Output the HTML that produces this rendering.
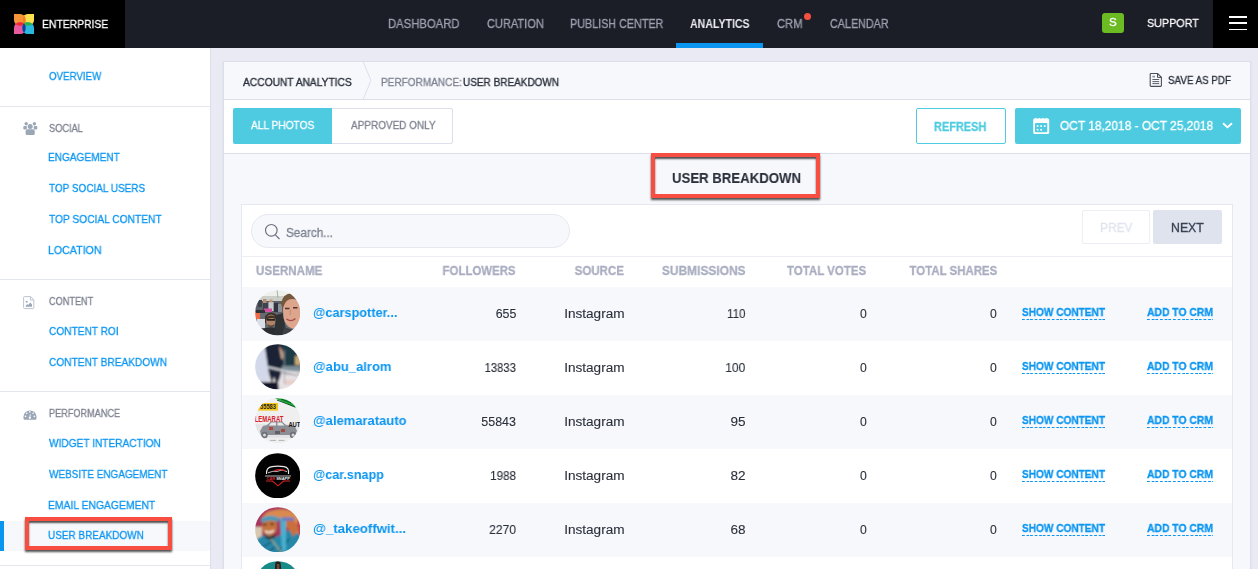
<!DOCTYPE html>
<html lang="en">
<head>
<meta charset="utf-8">
<title>Account Analytics - User Breakdown</title>
<style>
*{box-sizing:border-box;margin:0;padding:0}
html,body{width:1258px;height:569px;overflow:hidden;background:#e9eaf3;font-family:"Liberation Sans",sans-serif;color:#2a2f3a}
.abs{position:absolute}
span.t{position:absolute;white-space:nowrap;line-height:1;display:block;will-change:transform;-webkit-text-stroke:.3px currentColor}
#nav{position:absolute;left:0;top:0;width:1258px;height:48px;background:#1b1d27}
#logo{position:absolute;left:0;top:0;width:125px;height:49px;background:#000}
#burger{position:absolute;left:1213px;top:0;width:45px;height:48px;background:#000}
#burger i{position:absolute;left:16px;width:18px;height:2px;background:#fff}
#avatarS{position:absolute;left:1102px;top:13px;width:22px;height:20px;border-radius:3px;background:#6cbb23}
#side{position:absolute;left:0;top:48px;width:211px;height:521px;background:#fff;border-right:1px solid #dcdfe9}
.hr{position:absolute;left:0;width:210px;height:1px;background:#e4e6ef}
#card{position:absolute;left:223px;top:61px;width:1028px;height:520px;background:#f7f8fc;border:1px solid #dcdfe9;box-shadow:0 1px 2px rgba(120,125,160,.15)}
#tool{position:absolute;left:224px;top:99px;width:1026px;height:55px;background:#fff;border-top:1px solid #dcdfe9;border-bottom:1px solid #dcdfe9}
#inner{position:absolute;left:241px;top:204px;width:992px;height:380px;background:#fff;border:1px solid #e6e8f0}
.row{position:absolute;left:242px;width:990px;height:54px;background:#f7f8fc}
.av{position:absolute;left:255px;width:45px;height:45px;border-radius:50%;overflow:hidden}
.redbox{position:absolute;border:4px solid #f84d41;box-shadow:0 2px 2px rgba(0,0,0,.68),inset 0 2px 2px rgba(0,0,0,.68)}
</style>
</head>
<body>
<div id="nav"></div>
<div id="logo">
  <svg class="abs" style="left:14px;top:14px" width="20" height="20" viewBox="0 0 20 20">
    <defs>
      <path id="pt" d="M0 0 H6.2 A5.5 5.5 0 0 1 11.7 5.5 V6.7 A5 5 0 0 1 6.7 11.7 H5.5 A5.5 5.5 0 0 1 0 6.2 Z"/>
      <clipPath id="cO"><use href="#pt"/></clipPath>
      <clipPath id="cC"><use href="#pt" transform="translate(20 20) scale(-1 -1)"/></clipPath>
    </defs>
    <use href="#pt" fill="#f8933a"/>
    <use href="#pt" fill="#ffe14d" transform="translate(20 0) scale(-1 1)"/>
    <use href="#pt" fill="#ea5a9e" transform="translate(0 20) scale(1 -1)"/>
    <use href="#pt" fill="#29b8e0" transform="translate(20 20) scale(-1 -1)"/>
    <g clip-path="url(#cO)">
      <use href="#pt" fill="#f57f20" transform="translate(20 0) scale(-1 1)"/>
      <use href="#pt" fill="#ee2c30" transform="translate(0 20) scale(1 -1)"/>
    </g>
    <g clip-path="url(#cC)">
      <use href="#pt" fill="#2eb24c" transform="translate(20 0) scale(-1 1)"/>
      <use href="#pt" fill="#1c3a9a" transform="translate(0 20) scale(1 -1)"/>
    </g>
  </svg>
</div>
<div class="abs" style="left:676px;top:43px;width:87px;height:5px;background:#0a95f0"></div>
<div class="abs" style="left:804px;top:13px;width:7px;height:7px;border-radius:50%;background:#f4503f"></div>
<div id="avatarS"></div>
<div id="burger"><i style="top:16px"></i><i style="top:22px"></i><i style="top:29px;height:1px"></i></div>

<div id="side"></div>
<div class="abs" style="left:0;top:521px;width:210px;height:30px;background:#f7f8fc"></div>
<div class="abs" style="left:0;top:521px;width:4px;height:30px;background:#0a95f0"></div>
<div class="hr" style="top:106px"></div>
<div class="hr" style="top:279px"></div>
<div class="hr" style="top:391px"></div>
<div class="hr" style="top:565px"></div>
<div class="redbox" style="left:25px;top:517px;width:147px;height:33px"></div>

<div id="card"></div>
<div id="tool"></div>
<svg class="abs" style="left:362px;top:62px" width="12" height="37" viewBox="0 0 12 37"><path d="M1.3 0 L9 18.5 L1.3 37" fill="none" stroke="#dcdfe9" stroke-width="1"/></svg>

<div class="abs" style="left:233px;top:108px;width:220px;height:36px;border:1px solid #dcdfe9;border-radius:2px;background:#fff"></div>
<div class="abs" style="left:233px;top:108px;width:99px;height:36px;background:#4ecbe0;border-radius:2px 0 0 2px"></div>
<div class="abs" style="left:916px;top:108px;width:90px;height:36px;border:1px solid #4ecbe0;border-radius:2px;background:#fff"></div>
<div class="abs" style="left:1015px;top:108px;width:226px;height:36px;border-radius:2px;background:#4ecbe0"></div>

<div class="redbox" style="left:651px;top:153px;width:169px;height:45px"></div>

<div id="inner"></div>
<div class="abs" style="left:251px;top:214px;width:319px;height:34px;border:1px solid #e6e8f0;border-radius:17px;background:#f7f8fc"></div>
<svg class="abs" style="left:264px;top:223px" width="17" height="17" viewBox="0 0 17 17"><circle cx="7.3" cy="7.3" r="5.8" fill="none" stroke="#6d7280" stroke-width="1.2"/><path d="M11.3 11.8 L15.5 16" stroke="#6d7280" stroke-width="1.2"/></svg>
<div class="abs" style="left:1082px;top:210px;width:68px;height:34px;border:1px solid #eceef4;border-radius:2px;background:#fff"></div>
<div class="abs" style="left:1153px;top:210px;width:69px;height:34px;border-radius:2px;background:#dfe3ee"></div>
<div class="abs" style="left:242px;top:256px;width:990px;height:1px;background:#eceef4"></div>
<div class="row" style="top:287px"></div>
<div class="row" style="top:395px"></div>
<div class="row" style="top:503px"></div>
<svg class="abs" width="0" height="0"><defs>
  <filter id="bl1" x="-10%" y="-10%" width="120%" height="120%"><feGaussianBlur stdDeviation="0.9"/></filter>
  <filter id="bl2" x="-10%" y="-10%" width="120%" height="120%"><feGaussianBlur stdDeviation="0.6"/></filter>
  <clipPath id="cc"><circle cx="22.75" cy="22.75" r="22.6"/></clipPath>
</defs></svg>
<svg class="abs" style="left:254.7px;top:290.2px" width="45.5" height="45.5" viewBox="0 0 45.5 45.5">
  <g clip-path="url(#cc)"><g filter="url(#bl2)">
    <rect x="-3" y="-3" width="52" height="52" fill="#666b70"/>
    <rect x="-3" y="-3" width="52" height="11" fill="#eef0ec"/>
    <rect x="4" y="6" width="26" height="7" fill="#cdd0c8"/>
    <path d="M22 0 L23 8" stroke="#9aa09a" stroke-width=".8"/>
    <rect x="0" y="11" width="28" height="12" fill="#5c6168"/>
    <rect x="3" y="10" width="4" height="7" fill="#3a3f4c"/><rect x="8" y="9" width="3.5" height="4" fill="#b89078"/>
    <rect x="8" y="13" width="5" height="8" fill="#3d4250"/>
    <rect x="13.5" y="12" width="5" height="9" fill="#c9ccd2"/><rect x="14.5" y="9.5" width="3" height="3" fill="#c29a80"/>
    <rect x="19" y="13" width="4" height="9" fill="#2f3440"/><rect x="23" y="14" width="4" height="8" fill="#8c9098"/>
    <rect x="9" y="18.5" width="8" height="3.5" fill="#d650a0"/>
    <rect x="-1" y="22" width="6" height="7" fill="#ee6a4a"/>
    <rect x="1" y="20" width="9" height="3" fill="#2e3138"/>
    <rect x="2" y="29" width="8" height="9" fill="#d9dde6"/>
    <path d="M10 26 Q16 19 23 26 L23 33 L10 33 Z" fill="#3b302a"/>
    <ellipse cx="16" cy="30.5" rx="5" ry="6" fill="#b08468"/>
    <path d="M11 27.5 Q16 23.5 21.5 27.5 L21 29 Q16 27 11.5 29.5 Z" fill="#3b302a"/>
    <rect x="11.5" y="29" width="8.5" height="1.7" fill="#26221f"/>
    <path d="M12.5 34 Q16 37 19.5 34 L19 36 Q16 38 13 36 Z" fill="#5a4034"/>
    <path d="M7 39 Q17 35 27 40 L30 50 H3 Z" fill="#2c2f33"/>
    <path d="M21 25 L28 23 L32 46 L19 46 Z" fill="#2f3236"/>
    <path d="M27.5 11 Q32 1 43 7 L48 28 Q45 41 37 38.5 Q30.5 36 28.5 28 Z" fill="#dca58c"/>
    <path d="M26 14 Q28 2 39 3.5 Q46 5 47.5 13 Q40 7.5 34 9.5 Q29.5 11.5 28 19 Z" fill="#76583e"/>
    <path d="M30 18.4 h4.5 M38 17.8 h4.5" stroke="#4f362a" stroke-width="1.5"/>
    <path d="M35.5 20 L35 25" stroke="#c48a74" stroke-width="1"/>
    <path d="M31.5 29 Q36 32.5 40.5 28.5" stroke="#a84a48" stroke-width="1.4" fill="none"/>
    <path d="M29 36 Q36 43 45 35 L48 48 H27 Z" fill="#3c3f44"/>
  </g></g>
</svg>
<svg class="abs" style="left:254.7px;top:344.4px" width="45.5" height="45.5" viewBox="0 0 45.5 45.5">
  <g clip-path="url(#cc)"><g filter="url(#bl1)">
    <rect x="-3" y="-3" width="52" height="52" fill="#e6e2e4"/>
    <rect x="24" y="-3" width="26" height="27" fill="#1f3b45"/>
    <rect x="40" y="12" width="8" height="9" fill="#c5a878"/>
    <rect x="26" y="22" width="24" height="5" fill="#7d8f98"/>
    <rect x="28" y="27" width="20" height="4" fill="#c9c3c8"/>
    <rect x="30" y="36" width="12" height="5" fill="#e8cfc8"/>
    <path d="M-3 -3 H12 L14 46 H-3 Z" fill="#d3d9ea"/>
    <path d="M9 -3 H27 L28 12 L26 30 Q24 38 21 40 L19 32 L17 40 L14 30 Z" fill="#1b2036"/>
    <path d="M24 2 Q30 8 28 16 L26 14 Z" fill="#c9a58c"/>
    <path d="M4 38 H23 L24 48 H8 Z" fill="#14182c"/>
    <path d="M13 23 L43 30" stroke="#f2f2f4" stroke-width="1.6"/>
    <path d="M13 24.6 L43 31.6" stroke="#6a6f80" stroke-width=".8"/>
    <path d="M29.5 6 V40" stroke="#8a8f9a" stroke-width=".8"/>
  </g></g>
</svg>
<svg class="abs" style="left:254.7px;top:398.3px" width="45.5" height="45.5" viewBox="0 0 45.5 45.5">
  <g clip-path="url(#cc)">
    <rect x="-3" y="-3" width="52" height="52" fill="#efeff0"/>
    <g filter="url(#bl2)">
    <path d="M15 -2 L48 -2 L48 14 Z" fill="#f8f8f8"/>
    <path d="M17 -1 L44 -1 L46 12 Z" fill="#1fa43a"/>
    <path d="M22 2 L40 9 M26 1 L42 7" stroke="#0d5a1e" stroke-width="1"/>
    <rect x="3" y="5" width="20" height="7.6" fill="#f6c51a"/>
    <rect x="-2" y="26" width="50" height="14" fill="#e4e4e6"/>
    <path d="M5 33 L8 28 L12 27 L16 23.5 H27 L31 27 L40 28.5 L42 33 L40 37 H6 Z" fill="#8b8e94"/>
    <path d="M16.5 24.5 H21 V27.5 H13.5 Z M22.5 24.5 H26.5 L29.5 27.5 H22.5 Z" fill="#e9e9ea"/>
    <circle cx="9.5" cy="37" r="3.2" fill="#6e7178"/><circle cx="9.5" cy="37" r="1.5" fill="#d8d8da"/>
    <circle cx="38" cy="37" r="3.2" fill="#6e7178"/><circle cx="38" cy="37" r="1.5" fill="#d8d8da"/>
    <rect x="14" y="29" width="4" height="3" fill="#b5473f"/><rect x="26" y="31" width="4" height="3" fill="#a04a44"/><rect x="20" y="33" width="5" height="3" fill="#5d6066"/>
    </g>
    <text x="5" y="11.2" font-family="Liberation Sans, sans-serif" font-weight="bold" font-size="6.6" fill="#222" textLength="16" lengthAdjust="spacingAndGlyphs">55583</text>
    <text x="-4.6" y="23.6" font-family="Liberation Sans, sans-serif" font-weight="bold" font-size="8.4" fill="#d8222b" textLength="33" lengthAdjust="spacingAndGlyphs">ALEMARAT</text>
    <text x="33.4" y="28.8" font-family="Liberation Sans, sans-serif" font-weight="bold" font-size="7.4" fill="#151515" textLength="16.5" lengthAdjust="spacingAndGlyphs">AUTO</text>
    <path d="M15 42.4 h6 M23.5 42.4 h6" stroke="#a9abb0" stroke-width=".9"/>
  </g>
</svg>
<svg class="abs" style="left:254.7px;top:452.6px" width="45.5" height="45.5" viewBox="0 0 45.5 45.5">
  <g clip-path="url(#cc)">
    <rect x="-3" y="-3" width="52" height="52" fill="#020202"/>
    <g filter="url(#bl2)" fill="none">
      <path d="M11.5 21 Q11 14.5 17 13.6 Q23 12.6 29 13.6 Q34.5 14.5 33.5 21" stroke="#e8e8e8" stroke-width="1.1"/>
      <path d="M13 19.8 Q18 17.6 22 18.4 Q27 15.6 32 18.6" stroke="#d8d8d8" stroke-width=".9"/>
      <path d="M19 18 Q24 15.5 30 17.6" stroke="#d81f26" stroke-width="1.2"/>
      <path d="M10 23 H36" stroke="#e8e8e8" stroke-width=".8"/>
      <path d="M11 28 H17.5 L23 32.8 L28.5 28 H35" stroke="#d81f26" stroke-width="1.1"/>
    </g>
    <text x="11.6" y="27" font-family="Liberation Sans, sans-serif" font-weight="bold" font-size="3.9" fill="#e0262c" textLength="8.5" lengthAdjust="spacingAndGlyphs">CAR</text>
    <text x="21.2" y="27" font-family="Liberation Sans, sans-serif" font-weight="bold" font-size="3.9" fill="#f2f2f2" textLength="13.6" lengthAdjust="spacingAndGlyphs">SNAPP</text>
  </g>
</svg>
<svg class="abs" style="left:254.7px;top:506.6px" width="45.5" height="45.5" viewBox="0 0 45.5 45.5">
  <g clip-path="url(#cc)"><g filter="url(#bl1)">
    <rect x="-3" y="-3" width="52" height="52" fill="#a8345c"/>
    <rect x="-3" y="20" width="10" height="18" fill="#d8c8b0"/>
    <rect x="34" y="4" width="14" height="30" fill="#c43a50"/>
    <path d="M36 8 l4 4 l4 -5 M38 22 l5 4" stroke="#f0d060" stroke-width="1.5" fill="none"/>
    <path d="M0 34 Q10 24 22 30 L36 22 L47 30 V48 H0 Z" fill="#2787a8"/>
    <path d="M8 40 L18 34 M24 44 L34 32 M12 46 L20 40" stroke="#16506e" stroke-width="1.4"/>
    <path d="M6 14 Q8 4 20 3 Q36 0 44 10 L42 18 Q34 8 24 12 Z" fill="#d98a50"/>
    <path d="M30 12 Q40 12 44 22 L38 30 Q34 20 28 18 Z" fill="#c8703c"/>
    <ellipse cx="14.5" cy="19" rx="7.5" ry="10" fill="#c4733c"/>
    <path d="M6 12 Q14 6 24 11 L23 15 Q14 11 7 16 Z" fill="#3e9cc0"/>
    <path d="M8 17.5 h4 M15 17 h4" stroke="#3a2216" stroke-width="1.3"/>
    <path d="M10 24 Q14 27 19 23.5" stroke="#f4ece0" stroke-width="1.6" fill="none"/>
    <path d="M9 27 Q14 33 21 26 L20 30 Q14 35 10 30 Z" fill="#3a2216"/>
    <path d="M25 10 L31 12 L31 44 L27 44 Z" fill="#4ab0d0"/>
    <path d="M27 12 h12" stroke="#5a7ad0" stroke-width="3"/>
    <path d="M16 32 Q22 40 27 46" stroke="#d8c070" stroke-width="1" fill="none"/>
  </g></g>
</svg>
<svg class="abs" style="left:254.7px;top:560.6px" width="45.5" height="45.5" viewBox="0 0 45.5 45.5">
  <g clip-path="url(#cc)"><g filter="url(#bl2)">
    <rect x="-3" y="-3" width="52" height="52" fill="#178b88"/>
    <path d="M20.5 1 Q23 -1 25.5 1.5 L26.5 12 H19.5 Z" fill="#2c1a18"/>
    <rect x="21.8" y="3" width="2.6" height="7" fill="#6e4636"/>
  </g></g>
</svg>
<svg class="abs" style="left:23px;top:121px" width="15" height="15" viewBox="0 0 15 15" fill="#9ba7b7">
  <circle cx="3.2" cy="2.7" r="1.7"/><circle cx="11.4" cy="2.7" r="1.7"/>
  <rect x="0.3" y="5" width="3.6" height="3.4" rx="1"/><rect x="10.7" y="5" width="3.6" height="3.4" rx="1"/>
  <circle cx="7.2" cy="5.5" r="2.5"/>
  <path d="M2.6 10.2 A1.9 1.9 0 0 1 4.5 8.3 H9.9 A1.9 1.9 0 0 1 11.8 10.2 V12.4 A1.6 1.6 0 0 1 10.2 14 H4.2 A1.6 1.6 0 0 1 2.6 12.4 Z"/>
</svg>
<svg class="abs" style="left:23px;top:296px" width="12" height="14" viewBox="0 0 12 14">
  <path d="M1.6 0.6 H7.6 L10.8 3.8 V11.6 A1 1 0 0 1 9.8 12.6 H1.6 A1 1 0 0 1 0.6 11.6 V1.6 A1 1 0 0 1 1.6 0.6 Z" fill="#fff" stroke="#bcc4d0" stroke-width="1"/>
  <path d="M7.4 0.8 V4 H10.6" fill="none" stroke="#bcc4d0" stroke-width="1"/>
  <circle cx="3.7" cy="5.8" r="1" fill="#9ba7b7"/>
  <path d="M2.2 10.8 L4.2 8 L5.2 9 L7.3 6.6 L9 8.4 V10.8 Z" fill="#9ba7b7"/>
</svg>
<svg class="abs" style="left:23px;top:410px" width="14" height="10" viewBox="0 0 14 10">
  <path d="M1 9.8 A6.6 6.6 0 0 1 0.4 7 A6.6 6.6 0 0 1 13.6 7 A6.6 6.6 0 0 1 13 9.8 Z" fill="#9ba7b7"/>
  <g fill="#fff"><circle cx="2.5" cy="6.4" r=".8"/><circle cx="3.7" cy="3.3" r=".8"/><circle cx="6.8" cy="1.9" r=".8"/><circle cx="10.1" cy="3.3" r=".8"/><circle cx="11.4" cy="6.4" r=".8"/><circle cx="6.8" cy="7.8" r="1.1"/></g>
  <path d="M6.8 7.8 L7.4 4.4" stroke="#fff" stroke-width=".9"/>
</svg>
<svg class="abs" style="left:1149px;top:72px" width="14" height="16" viewBox="0 0 14 16" fill="none" stroke="#4a4f5a">
  <path d="M2 1.5 H8.6 L12.4 5.3 V13.6 A.8 .8 0 0 1 11.6 14.4 H2 A.8 .8 0 0 1 1.2 13.6 V2.3 A.8 .8 0 0 1 2 1.5 Z" stroke-width="1.1"/>
  <path d="M8.5 1.7 V5.4 H12.2" stroke-width="1"/>
  <path d="M3.4 7.5 H10.2 M3.4 9.6 H10.2 M3.4 11.6 H10.2" stroke-width=".9"/>
  <path d="M3.4 4.6 H6" stroke-width="1.6" stroke="#8a8e98"/>
</svg>
<svg class="abs" style="left:1033px;top:117px" width="17" height="18" viewBox="0 0 17 18">
  <path d="M0.2 3 Q0.2 1.6 1.6 1.6 L2.4 0.8 L3.4 1.6 H5.3 L6.2 0.8 L7.1 1.6 H9.1 L10 0.8 L10.9 1.6 H12.8 L13.7 0.8 L14.6 1.6 Q16.2 1.6 16.2 3 V15.4 Q16.2 17 14.6 17 H1.8 Q0.2 17 0.2 15.4 Z" fill="#fff"/>
  <rect x="2" y="6" width="12.3" height="9.2" rx=".8" fill="#4ecbe0"/>
  <g fill="#fff"><rect x="3.7" y="8.2" width="1.7" height="1.7"/><rect x="7.3" y="8.2" width="1.7" height="1.7"/><rect x="10.9" y="8.2" width="1.7" height="1.7"/><rect x="3.7" y="11.9" width="1.7" height="1.7"/><rect x="7.3" y="11.9" width="1.7" height="1.7"/></g>
</svg>
<svg class="abs" style="left:1222px;top:122px" width="11" height="8" viewBox="0 0 11 8"><path d="M1.6 1.7 L5.5 5.4 L9.4 1.7" fill="none" stroke="#fff" stroke-width="1.9" stroke-linecap="round" stroke-linejoin="round"/></svg>
<span class="t" style="top:18.16px;font-size:11.63px;color:#fff;left:41.8px;transform-origin:0 50%;transform:scaleX(0.891);">ENTERPRISE</span>
<span class="t" style="top:18.91px;font-size:11.92px;color:#9da0ae;left:388px;transform-origin:0 50%;transform:scaleX(0.949);">DASHBOARD</span>
<span class="t" style="top:18.91px;font-size:11.92px;color:#9da0ae;left:486.5px;transform-origin:0 50%;transform:scaleX(0.927);">CURATION</span>
<span class="t" style="top:18.91px;font-size:11.92px;color:#9da0ae;left:570.1px;transform-origin:0 50%;transform:scaleX(0.905);">PUBLISH CENTER</span>
<span class="t" style="top:18.91px;font-size:11.92px;color:#9da0ae;left:777.3px;transform-origin:0 50%;transform:scaleX(0.94);">CRM</span>
<span class="t" style="top:18.91px;font-size:11.92px;color:#9da0ae;left:830.3px;transform-origin:0 50%;transform:scaleX(0.904);">CALENDAR</span>
<span class="t" style="top:18.91px;font-size:11.92px;color:#ececf0;font-weight:bold;left:690.3px;transform-origin:0 50%;transform:scaleX(0.889);-webkit-text-stroke:0;">ANALYTICS</span>
<span class="t" style="top:16.93px;font-size:11.77px;color:#fff;left:1147.1px;transform-origin:0 50%;transform:scaleX(0.914);">SUPPORT</span>
<span class="t" style="top:16.16px;font-size:11.63px;color:#fff;left:1108.6px;transform-origin:0 50%;transform:scaleX(1);">S</span>
<span class="t" style="top:71.4px;font-size:11.34px;color:#0a95f0;left:48.8px;transform-origin:0 50%;transform:scaleX(0.858);">OVERVIEW</span>
<span class="t" style="top:151.5px;font-size:11.34px;color:#0a95f0;left:47.6px;transform-origin:0 50%;transform:scaleX(0.89);">ENGAGEMENT</span>
<span class="t" style="top:182.5px;font-size:11.34px;color:#0a95f0;left:48.8px;transform-origin:0 50%;transform:scaleX(0.879);">TOP SOCIAL USERS</span>
<span class="t" style="top:214.3px;font-size:11.34px;color:#0a95f0;left:48.8px;transform-origin:0 50%;transform:scaleX(0.9);">TOP SOCIAL CONTENT</span>
<span class="t" style="top:244.5px;font-size:11.34px;color:#0a95f0;left:47.6px;transform-origin:0 50%;transform:scaleX(0.937);">LOCATION</span>
<span class="t" style="top:326.4px;font-size:11.34px;color:#0a95f0;left:48.8px;transform-origin:0 50%;transform:scaleX(0.895);">CONTENT ROI</span>
<span class="t" style="top:357.3px;font-size:11.34px;color:#0a95f0;left:48.8px;transform-origin:0 50%;transform:scaleX(0.895);">CONTENT BREAKDOWN</span>
<span class="t" style="top:438.4px;font-size:11.34px;color:#0a95f0;left:48.8px;transform-origin:0 50%;transform:scaleX(0.894);">WIDGET INTERACTION</span>
<span class="t" style="top:469.3px;font-size:11.34px;color:#0a95f0;left:48.8px;transform-origin:0 50%;transform:scaleX(0.88);">WEBSITE ENGAGEMENT</span>
<span class="t" style="top:499.5px;font-size:11.34px;color:#0a95f0;left:47.6px;transform-origin:0 50%;transform:scaleX(0.914);">EMAIL ENGAGEMENT</span>
<span class="t" style="top:529.5px;font-size:11.34px;color:#0a95f0;left:47.6px;transform-origin:0 50%;transform:scaleX(0.88);">USER BREAKDOWN</span>
<span class="t" style="top:123.56px;font-size:10.32px;color:#7d8290;left:48.8px;transform-origin:0 50%;transform:scaleX(0.894);">SOCIAL</span>
<span class="t" style="top:297.36px;font-size:10.32px;color:#7d8290;left:48.8px;transform-origin:0 50%;transform:scaleX(0.887);">CONTENT</span>
<span class="t" style="top:408.56px;font-size:10.32px;color:#7d8290;left:48.8px;transform-origin:0 50%;transform:scaleX(0.886);">PERFORMANCE</span>
<span class="t" style="top:77.22px;font-size:10.61px;color:#2a2f3a;left:243.4px;transform-origin:0 50%;transform:scaleX(0.964);-webkit-text-stroke:.35px #2a2f3a">ACCOUNT ANALYTICS</span>
<span class="t" style="top:77.22px;font-size:10.61px;color:#7d8290;left:380.8px;transform-origin:0 50%;transform:scaleX(0.946);">PERFORMANCE:</span>
<span class="t" style="top:77.22px;font-size:10.61px;color:#2a2f3a;left:462.9px;transform-origin:0 50%;transform:scaleX(0.942);-webkit-text-stroke:.35px #2a2f3a">USER BREAKDOWN</span>
<span class="t" style="top:75.84px;font-size:10.47px;color:#2a2f3a;left:1168.2px;transform-origin:0 50%;transform:scaleX(0.935);">SAVE AS PDF</span>
<span class="t" style="top:119.53px;font-size:11.19px;color:#fff;left:250.6px;transform-origin:0 50%;transform:scaleX(0.908);">ALL PHOTOS</span>
<span class="t" style="top:119.53px;font-size:11.19px;color:#7d8290;left:350.5px;transform-origin:0 50%;transform:scaleX(0.891);">APPROVED ONLY</span>
<span class="t" style="top:120.54px;font-size:12.35px;color:#4ecbe0;font-weight:bold;left:934.1px;transform-origin:0 50%;transform:scaleX(0.888);">REFRESH</span>
<span class="t" style="top:120.29px;font-size:12.65px;color:#fff;left:1059.9px;transform-origin:0 50%;transform:scaleX(0.942);">OCT 18,2018 - OCT 25,2018</span>
<span class="t" style="top:170.7px;font-size:14.53px;color:#2a2f3a;font-weight:bold;left:672px;transform-origin:0 50%;transform:scaleX(0.909);-webkit-text-stroke:.1px;">USER BREAKDOWN</span>
<span class="t" style="top:226.52px;font-size:12.5px;color:#7d8290;left:286.1px;transform-origin:0 50%;transform:scaleX(0.94);">Search...</span>
<span class="t" style="top:222.06px;font-size:12.21px;color:#e1e4ee;left:1100.4px;transform-origin:0 50%;transform:scaleX(0.977);">PREV</span>
<span class="t" style="top:222.06px;font-size:12.21px;color:#3a4252;left:1171.2px;transform-origin:0 50%;transform:scaleX(1.01);">NEXT</span>
<span class="t" style="top:263.83px;font-size:13.08px;color:#a9adc0;font-weight:bold;left:255.5px;transform-origin:0 50%;transform:scaleX(0.887);">USERNAME</span>
<span class="t" style="top:263.83px;font-size:13.08px;color:#a9adc0;font-weight:bold;right:742.5px;transform-origin:100% 50%;transform:scaleX(0.874);">FOLLOWERS</span>
<span class="t" style="top:263.83px;font-size:13.08px;color:#a9adc0;font-weight:bold;right:634.3px;transform-origin:100% 50%;transform:scaleX(0.881);">SOURCE</span>
<span class="t" style="top:263.83px;font-size:13.08px;color:#a9adc0;font-weight:bold;right:512.9px;transform-origin:100% 50%;transform:scaleX(0.914);">SUBMISSIONS</span>
<span class="t" style="top:263.83px;font-size:13.08px;color:#a9adc0;font-weight:bold;right:391.5px;transform-origin:100% 50%;transform:scaleX(0.879);">TOTAL VOTES</span>
<span class="t" style="top:263.83px;font-size:13.08px;color:#a9adc0;font-weight:bold;right:261.1px;transform-origin:100% 50%;transform:scaleX(0.876);">TOTAL SHARES</span>
<span class="t" style="top:306.13px;font-size:13.66px;color:#0a95f0;font-weight:bold;left:313.1px;transform-origin:0 50%;transform:scaleX(0.93);-webkit-text-stroke:0;">@carspotter...</span>
<span class="t" style="top:307.86px;font-size:12.21px;color:#2a2f3a;right:741.4px;transform-origin:100% 50%;transform:scaleX(1.016);-webkit-text-stroke:.1px;">655</span>
<span class="t" style="top:307.62px;font-size:12.5px;color:#2a2f3a;right:633.6px;transform-origin:100% 50%;transform:scaleX(1.087);-webkit-text-stroke:.1px;">Instagram</span>
<span class="t" style="top:307.86px;font-size:12.21px;color:#2a2f3a;right:512.9px;transform-origin:100% 50%;transform:scaleX(0.949);-webkit-text-stroke:.1px;">110</span>
<span class="t" style="top:307.86px;font-size:12.21px;color:#2a2f3a;right:391.5px;transform-origin:100% 50%;transform:scaleX(1);-webkit-text-stroke:.1px;">0</span>
<span class="t" style="top:307.86px;font-size:12.21px;color:#2a2f3a;right:261px;transform-origin:100% 50%;transform:scaleX(1);-webkit-text-stroke:.1px;">0</span>
<span class="t" style="top:306.53px;font-size:11.19px;color:#0a95f0;font-weight:bold;left:1022px;transform-origin:0 50%;transform:scaleX(0.902);background:repeating-linear-gradient(90deg,#0a95f0 0 3px,transparent 3px 4.7px) 0 100%/100% 1px no-repeat;padding-bottom:2px">SHOW CONTENT</span>
<span class="t" style="top:306.53px;font-size:11.19px;color:#0a95f0;font-weight:bold;left:1147.1px;transform-origin:0 50%;transform:scaleX(0.926);background:repeating-linear-gradient(90deg,#0a95f0 0 3px,transparent 3px 4.7px) 0 100%/100% 1px no-repeat;padding-bottom:2px">ADD TO CRM</span>
<span class="t" style="top:360.13px;font-size:13.66px;color:#0a95f0;font-weight:bold;left:313.1px;transform-origin:0 50%;transform:scaleX(0.952);-webkit-text-stroke:0;">@abu_alrom</span>
<span class="t" style="top:361.86px;font-size:12.21px;color:#2a2f3a;right:742.2px;transform-origin:100% 50%;transform:scaleX(0.923);-webkit-text-stroke:.1px;">13833</span>
<span class="t" style="top:361.62px;font-size:12.5px;color:#2a2f3a;right:633.6px;transform-origin:100% 50%;transform:scaleX(1.087);-webkit-text-stroke:.1px;">Instagram</span>
<span class="t" style="top:361.86px;font-size:12.21px;color:#2a2f3a;right:512.9px;transform-origin:100% 50%;transform:scaleX(0.985);-webkit-text-stroke:.1px;">100</span>
<span class="t" style="top:361.86px;font-size:12.21px;color:#2a2f3a;right:391.5px;transform-origin:100% 50%;transform:scaleX(1);-webkit-text-stroke:.1px;">0</span>
<span class="t" style="top:361.86px;font-size:12.21px;color:#2a2f3a;right:261px;transform-origin:100% 50%;transform:scaleX(1);-webkit-text-stroke:.1px;">0</span>
<span class="t" style="top:360.53px;font-size:11.19px;color:#0a95f0;font-weight:bold;left:1022px;transform-origin:0 50%;transform:scaleX(0.902);background:repeating-linear-gradient(90deg,#0a95f0 0 3px,transparent 3px 4.7px) 0 100%/100% 1px no-repeat;padding-bottom:2px">SHOW CONTENT</span>
<span class="t" style="top:360.53px;font-size:11.19px;color:#0a95f0;font-weight:bold;left:1147.1px;transform-origin:0 50%;transform:scaleX(0.926);background:repeating-linear-gradient(90deg,#0a95f0 0 3px,transparent 3px 4.7px) 0 100%/100% 1px no-repeat;padding-bottom:2px">ADD TO CRM</span>
<span class="t" style="top:414.13px;font-size:13.66px;color:#0a95f0;font-weight:bold;left:313.1px;transform-origin:0 50%;transform:scaleX(0.951);-webkit-text-stroke:0;">@alemaratauto</span>
<span class="t" style="top:415.86px;font-size:12.21px;color:#2a2f3a;right:742.2px;transform-origin:100% 50%;transform:scaleX(1.022);-webkit-text-stroke:.1px;">55843</span>
<span class="t" style="top:415.62px;font-size:12.5px;color:#2a2f3a;right:633.6px;transform-origin:100% 50%;transform:scaleX(1.087);-webkit-text-stroke:.1px;">Instagram</span>
<span class="t" style="top:415.86px;font-size:12.21px;color:#2a2f3a;right:512.9px;transform-origin:100% 50%;transform:scaleX(1.11);-webkit-text-stroke:.1px;">95</span>
<span class="t" style="top:415.86px;font-size:12.21px;color:#2a2f3a;right:391.5px;transform-origin:100% 50%;transform:scaleX(1);-webkit-text-stroke:.1px;">0</span>
<span class="t" style="top:415.86px;font-size:12.21px;color:#2a2f3a;right:261px;transform-origin:100% 50%;transform:scaleX(1);-webkit-text-stroke:.1px;">0</span>
<span class="t" style="top:414.53px;font-size:11.19px;color:#0a95f0;font-weight:bold;left:1022px;transform-origin:0 50%;transform:scaleX(0.902);background:repeating-linear-gradient(90deg,#0a95f0 0 3px,transparent 3px 4.7px) 0 100%/100% 1px no-repeat;padding-bottom:2px">SHOW CONTENT</span>
<span class="t" style="top:414.53px;font-size:11.19px;color:#0a95f0;font-weight:bold;left:1147.1px;transform-origin:0 50%;transform:scaleX(0.926);background:repeating-linear-gradient(90deg,#0a95f0 0 3px,transparent 3px 4.7px) 0 100%/100% 1px no-repeat;padding-bottom:2px">ADD TO CRM</span>
<span class="t" style="top:468.13px;font-size:13.66px;color:#0a95f0;font-weight:bold;left:313.1px;transform-origin:0 50%;transform:scaleX(0.919);-webkit-text-stroke:0;">@car.snapp</span>
<span class="t" style="top:469.86px;font-size:12.21px;color:#2a2f3a;right:742.2px;transform-origin:100% 50%;transform:scaleX(0.959);-webkit-text-stroke:.1px;">1988</span>
<span class="t" style="top:469.62px;font-size:12.5px;color:#2a2f3a;right:633.6px;transform-origin:100% 50%;transform:scaleX(1.087);-webkit-text-stroke:.1px;">Instagram</span>
<span class="t" style="top:469.86px;font-size:12.21px;color:#2a2f3a;right:512.9px;transform-origin:100% 50%;transform:scaleX(1.11);-webkit-text-stroke:.1px;">82</span>
<span class="t" style="top:469.86px;font-size:12.21px;color:#2a2f3a;right:391.5px;transform-origin:100% 50%;transform:scaleX(1);-webkit-text-stroke:.1px;">0</span>
<span class="t" style="top:469.86px;font-size:12.21px;color:#2a2f3a;right:261px;transform-origin:100% 50%;transform:scaleX(1);-webkit-text-stroke:.1px;">0</span>
<span class="t" style="top:468.53px;font-size:11.19px;color:#0a95f0;font-weight:bold;left:1022px;transform-origin:0 50%;transform:scaleX(0.902);background:repeating-linear-gradient(90deg,#0a95f0 0 3px,transparent 3px 4.7px) 0 100%/100% 1px no-repeat;padding-bottom:2px">SHOW CONTENT</span>
<span class="t" style="top:468.53px;font-size:11.19px;color:#0a95f0;font-weight:bold;left:1147.1px;transform-origin:0 50%;transform:scaleX(0.926);background:repeating-linear-gradient(90deg,#0a95f0 0 3px,transparent 3px 4.7px) 0 100%/100% 1px no-repeat;padding-bottom:2px">ADD TO CRM</span>
<span class="t" style="top:522.13px;font-size:13.66px;color:#0a95f0;font-weight:bold;left:313.1px;transform-origin:0 50%;transform:scaleX(0.969);-webkit-text-stroke:0;">@_takeoffwit...</span>
<span class="t" style="top:523.86px;font-size:12.21px;color:#2a2f3a;right:742.2px;transform-origin:100% 50%;transform:scaleX(0.994);-webkit-text-stroke:.1px;">2270</span>
<span class="t" style="top:523.62px;font-size:12.5px;color:#2a2f3a;right:633.6px;transform-origin:100% 50%;transform:scaleX(1.087);-webkit-text-stroke:.1px;">Instagram</span>
<span class="t" style="top:523.86px;font-size:12.21px;color:#2a2f3a;right:512.9px;transform-origin:100% 50%;transform:scaleX(1.11);-webkit-text-stroke:.1px;">68</span>
<span class="t" style="top:523.86px;font-size:12.21px;color:#2a2f3a;right:391.5px;transform-origin:100% 50%;transform:scaleX(1);-webkit-text-stroke:.1px;">0</span>
<span class="t" style="top:523.86px;font-size:12.21px;color:#2a2f3a;right:261px;transform-origin:100% 50%;transform:scaleX(1);-webkit-text-stroke:.1px;">0</span>
<span class="t" style="top:522.53px;font-size:11.19px;color:#0a95f0;font-weight:bold;left:1022px;transform-origin:0 50%;transform:scaleX(0.902);background:repeating-linear-gradient(90deg,#0a95f0 0 3px,transparent 3px 4.7px) 0 100%/100% 1px no-repeat;padding-bottom:2px">SHOW CONTENT</span>
<span class="t" style="top:522.53px;font-size:11.19px;color:#0a95f0;font-weight:bold;left:1147.1px;transform-origin:0 50%;transform:scaleX(0.926);background:repeating-linear-gradient(90deg,#0a95f0 0 3px,transparent 3px 4.7px) 0 100%/100% 1px no-repeat;padding-bottom:2px">ADD TO CRM</span>
</body>
</html>
